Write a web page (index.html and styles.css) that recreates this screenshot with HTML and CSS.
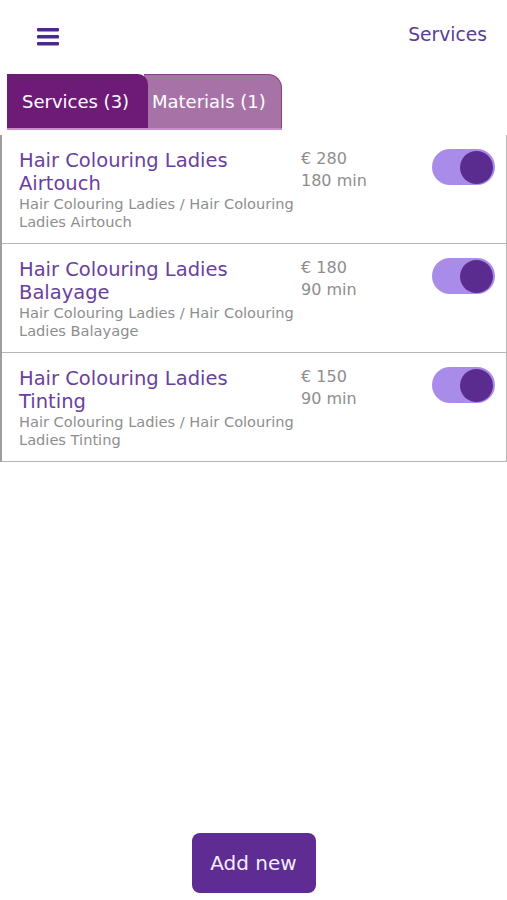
FILE: index.html
```html
<!DOCTYPE html>
<html lang="en">
<head>
  <meta charset="UTF-8">
  <meta name="viewport" content="width=device-width, initial-scale=1.0">
  <title>Services</title>
  <link rel="stylesheet" href="styles.css">
</head>
<body>
  <div class="page">
    <div class="topbar">
      <button class="menu" aria-label="Menu">
        <svg width="22" height="18" viewBox="0 0 22 18">
          <rect x="0" y="0" width="22" height="3.4" rx="1" fill="#4b2a8c"/>
          <rect x="0" y="7" width="22" height="3.4" rx="1" fill="#4b2a8c"/>
          <rect x="0" y="14" width="22" height="3.4" rx="1" fill="#4b2a8c"/>
        </svg>
      </button>
      <div class="title">Services</div>
    </div>

    <div class="tabs">
      <div class="tab active">Services (3)</div>
      <div class="tab">Materials (1)</div>
    </div>

    <div class="list">
      <div class="row">
        <div class="info">
          <div class="name">Hair Colouring Ladies Airtouch</div>
          <div class="path">Hair Colouring Ladies / Hair Colouring Ladies Airtouch</div>
        </div>
        <div class="meta">
          <div>€ 280</div>
          <div>180 min</div>
        </div>
        <div class="toggle"><span class="knob"></span></div>
      </div>
      <div class="row">
        <div class="info">
          <div class="name">Hair Colouring Ladies Balayage</div>
          <div class="path">Hair Colouring Ladies / Hair Colouring Ladies Balayage</div>
        </div>
        <div class="meta">
          <div>€ 180</div>
          <div>90 min</div>
        </div>
        <div class="toggle"><span class="knob"></span></div>
      </div>
      <div class="row">
        <div class="info">
          <div class="name">Hair Colouring Ladies Tinting</div>
          <div class="path">Hair Colouring Ladies / Hair Colouring Ladies Tinting</div>
        </div>
        <div class="meta">
          <div>€ 150</div>
          <div>90 min</div>
        </div>
        <div class="toggle"><span class="knob"></span></div>
      </div>
    </div>

    <div class="footer">
      <button class="add">Add new</button>
    </div>
  </div>
</body>
</html>
```

FILE: styles.css
```css
html, body {
  margin: 0;
  padding: 0;
  background: #fff;
}
body {
  font-family: "DejaVu Sans", "Noto Sans", sans-serif;
}
.page {
  width: 507px;
  height: 900px;
  display: flex;
  flex-direction: column;
}
.topbar {
  display: flex;
  justify-content: space-between;
  align-items: center;
  padding: 20px 20px 0 37px;
  height: 28px;
  margin-bottom: 2px;
}
.menu {
  border: 0;
  background: none;
  padding: 0;
  display: flex;
  margin-top: 6px;
}
.title {
  color: #5d3c98;
  font-size: 18.7px;
}
.tabs {
  display: flex;
  margin: 24px 0 0 7px;
  width: 275px;
  border-bottom: 2px solid #c98ccd;
}
.tab {
  height: 54px;
  display: flex;
  align-items: center;
  color: #fff;
  font-size: 18px;
  box-sizing: border-box;
}
.tab.active {
  background: #6e1b77;
  width: 141px;
  padding-left: 15px;
  border-top-right-radius: 10px;
  position: relative;
  z-index: 1;
}
.tab:not(.active) {
  background: #a773a6;
  flex: 1;
  margin-left: -4px;
  padding-left: 8px;
  border-top-right-radius: 14px;
  border-top: 1px solid #8a3f8c;
  border-right: 1px solid #8a3f8c;
}
.list {
  margin-top: 5px;
  border-left: 2px solid #9e9e9e;
  border-right: 1px solid #b5b5b5;
  border-bottom: 1px solid #b5b5b5;
}
.row {
  display: flex;
  align-items: flex-start;
  height: 108px;
  box-sizing: border-box;
  padding: 14px 11px 0 17px;
}
.row + .row {
  border-top: 1px solid #b5b5b5;
  height: 109px;
}
.info {
  width: 282px;
}
.name {
  color: #6a3f9e;
  font-size: 19.5px;
  line-height: 23px;
  max-width: 272px;
}
.path {
  color: #8e8e8e;
  font-size: 14.6px;
  line-height: 18px;
}
.meta {
  color: #8e8e8e;
  font-size: 16px;
  line-height: 22px;
  margin-top: -1px;
}
.toggle {
  margin-left: auto;
  width: 63px;
  height: 36px;
  border-radius: 18px;
  background: #a98be9;
  display: flex;
  align-items: center;
  justify-content: flex-end;
  padding-right: 2px;
  box-sizing: border-box;
}
.knob {
  width: 33px;
  height: 33px;
  border-radius: 50%;
  background: #5b2c8f;
}
.footer {
  margin-top: auto;
  display: flex;
  justify-content: center;
  padding: 0 0 7px 0;
}
.add {
  width: 124px;
  height: 60px;
  border: 0;
  border-radius: 8px;
  background: #5e2c92;
  color: #f3ecfa;
  font-family: inherit;
  font-size: 20px;
}
```
